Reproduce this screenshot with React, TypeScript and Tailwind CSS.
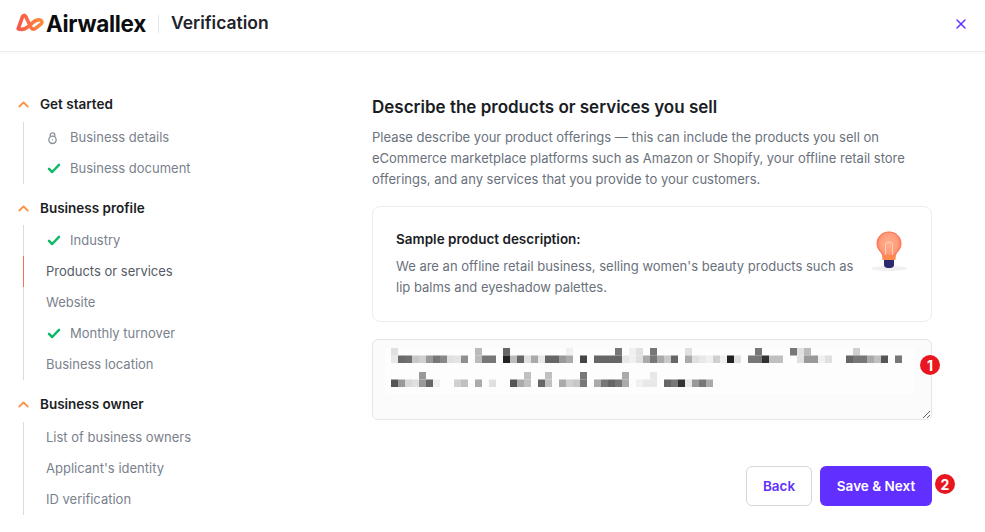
import React from "react";
import { ChevronUp, X } from "lucide-react";

const row1: [number, string][] = [
  [0,"e8"],[1,"6b"],[2,"70"],[3,"c8"],[4,"d0"],[5,"99"],[6,"77"],[7,"88"],[8,"e0"],[9,"e4"],[10,"90"],[12,"bb"],[13,"77"],[14,"77"],[16,"22"],[17,"bb"],[18,"66"],[19,"e0"],[20,"aa"],[21,"e8"],[22,"66"],[23,"66"],[24,"99"],[25,"aa"],[27,"44"],[29,"66"],[30,"66"],[31,"66"],[32,"66"],[33,"e8"],[34,"f0"],[35,"e0"],[36,"aa"],[37,"77"],[38,"aa"],[39,"c8"],[40,"66"],[42,"aa"],[43,"e0"],[44,"e8"],[45,"f0"],[46,"d0"],[47,"f0"],[48,"22"],[49,"e0"],[51,"77"],[52,"77"],[53,"33"],[54,"c0"],[55,"c0"],[58,"e0"],[59,"99"],[60,"99"],[61,"f0"],[62,"e0"],[65,"66"],[66,"77"],[67,"77"],[68,"aa"],[69,"c0"],[70,"55"],[72,"77"],
];
const top1: [number, string][] = [
  [0,"e0"],[12,"bb"],[16,"66"],[25,"f0"],[32,"77"],[34,"f0"],[35,"e0"],[37,"77"],[42,"e0"],[52,"77"],[57,"77"],[58,"e0"],[59,"bb"],[66,"d0"],
];
const row2: [number, string][] = [
  [0,"55"],[1,"99"],[2,"d8"],[3,"e0"],[4,"99"],[5,"66"],[6,"f0"],[9,"d0"],[10,"c0"],[12,"aa"],[14,"e0"],[17,"55"],[18,"aa"],[19,"c0"],[21,"66"],[22,"c0"],[24,"aa"],[25,"d0"],[26,"c8"],[27,"77"],[29,"aa"],[30,"77"],[31,"66"],[32,"77"],[33,"aa"],[35,"f0"],[36,"e8"],[37,"e8"],[39,"66"],[40,"77"],[41,"33"],[42,"e8"],[43,"99"],[44,"77"],[45,"aa"],
];
const top2: [number, string][] = [
  [4,"99"],[19,"c0"],[22,"c0"],[27,"77"],[33,"aa"],[37,"e8"],
];

function Mosaic() {
  const draw = (cells: [number, string][], y: number) =>
    cells.map(([c, g]) => (
      <rect key={`${y}-${c}`} x={c * 7} y={y} width={7} height={7.5} fill={`#${g}${g}${g}`} />
    ));
  return (
    <svg width="530" height="46" className="absolute left-[13px] top-[9px]" aria-hidden="true">
      <defs>
        <filter id="soft" x="-2%" y="-5%" width="104%" height="110%">
          <feGaussianBlur stdDeviation="0.45" />
        </filter>
      </defs>
      <rect x="0" y="0" width="530" height="46" fill="#fdfdfd" />
      <g filter="url(#soft)" transform="translate(6 0)">
        {draw(top1, 0)}
        {draw(row1, 7.5)}
        {draw(top2, 24)}
        {draw(row2, 31.5)}
      </g>
    </svg>
  );
}

function Logo() {
  return (
    <svg width="28" height="20" viewBox="0 0 28 20" fill="none" className="mb-[3px]" aria-hidden="true">
      <defs>
        <linearGradient id="lg" x1="0" y1="0" x2="28" y2="0" gradientUnits="userSpaceOnUse">
          <stop offset="0" stopColor="#f8524a" />
          <stop offset="1" stopColor="#ff8e3c" />
        </linearGradient>
      </defs>
      <path
        d="M2.200 15.800 L6.400 3.800 C7 2 8.800 2 9.800 3.600 L14.600 13.800 C15.800 16.400 17.800 16.800 19.800 15.200 L25.200 10.800 C26.600 9.400 25.800 6.800 23.400 6.800 C20.500 6.800 18.300 8 16.400 9.800 L11.500 14.200 C9 16.400 5.800 16.800 2.200 15.800 Z"
        stroke="url(#lg)"
        strokeWidth="3.600"
        strokeLinejoin="round"
      />
    </svg>
  );
}

function Bulb() {
  return (
    <svg width="36" height="42" viewBox="0 0 36 42" aria-hidden="true">
      <defs>
        <radialGradient id="bg" cx="50%" cy="42%" r="55%">
          <stop offset="0" stopColor="#ffb08f" />
          <stop offset="0.7" stopColor="#ff9a78" />
          <stop offset="1" stopColor="#fb6a4a" />
        </radialGradient>
      </defs>
      <ellipse cx="18" cy="37.500" rx="18" ry="2.500" fill="#f0f0f3" />
      <path d="M18 1 C10.500 1 6 6.500 6 12.500 C6 17 8.500 19.500 10.500 22 C11.500 23.500 12 25 12 28.500 L24 28.500 C24 25 24.500 23.500 25.500 22 C27.500 19.500 30 17 30 12.500 C30 6.500 25.500 1 18 1 Z" fill="url(#bg)" stroke="#fd6f50" strokeWidth="1" />
      <path d="M12 24 L24 24 L24 29 L12 29 Z" fill="#ff8a4c" />
      <path d="M14.500 24 L14.500 13 C14.500 10.500 21.500 10.500 21.500 13 L21.500 24" stroke="#ffd9c8" strokeWidth="0.8" fill="none" />
      <path d="M13 29 L23 29 L23 33.500 C23 37 20 37 18 37 C16 37 13 37 13 33.500 Z" fill="#2b2a6e" />
    </svg>
  );
}

function Padlock() {
  return (
    <svg width="12" height="14" viewBox="0 0 12 14" fill="none" stroke="#878e99" strokeWidth="1.400" aria-hidden="true">
      <circle cx="6" cy="9" r="4" />
      <path d="M3.500 5.500 V3.500 C3.500 0.800 8.500 0.800 8.500 3.500 V5.500" />
      <circle cx="6" cy="9" r="0.700" fill="#878e99" stroke="none" />
    </svg>
  );
}

function Tick() {
  return (
    <svg width="13" height="11" viewBox="0 0 13 11" fill="none" stroke="#12b76a" strokeWidth="2.500" strokeLinecap="round" strokeLinejoin="round" className="ml-[1px] mr-[9px] w-[14px]" aria-hidden="true">
      <path d="M1.500 5.800 L4.700 9 L11.500 1.800" />
    </svg>
  );
}

type Item = { label: string; icon?: "check" | "lock"; active?: boolean };

function Section({ title, items, className, listClass }: { title: string; items: Item[]; className: string; listClass: string }) {
  return (
    <div className={className}>
      <div className="flex h-6 items-center">
        <ChevronUp size={17} strokeWidth={2.6} className="ml-[15px] text-[#ff8e3c]" />
        <span className="ml-2 text-[13.500px] font-semibold text-[#1a1d24]">{title}</span>
      </div>
      <div className={`ml-[23px] border-l border-[#d9dbdf] ${listClass}`}>
        {items.map((it) => (
          <div
            key={it.label}
            className={`relative flex h-[31px] items-center pl-[22px] text-[13px] ${it.active ? "text-[#545b66]" : "text-[#7a818c]"}`}
          >
            {it.active && <span className="absolute -left-px top-0 h-full w-px bg-[#f0725c]" />}
            {it.icon === "check" && <Tick />}
            {it.icon === "lock" && <span className="mr-[12px] ml-[1px] flex w-[11px] justify-center"><Padlock /></span>}
            {it.label}
          </div>
        ))}
      </div>
    </div>
  );
}

function Badge({ n, className }: { n: number; className: string }) {
  return (
    <span className={`absolute flex h-5 w-5 items-center justify-center rounded-full bg-[#e8171f] text-[14px] font-bold text-white ${className}`}>
      {n}
    </span>
  );
}

export default function App() {
  return (
    <div className="h-[532px] w-[985px] overflow-hidden bg-white font-['Inter','Liberation_Sans',sans-serif]">
      <header className="flex h-[52px] items-center border-b border-[#ececee] pb-[3px] pl-4 pr-4 shadow-[0_1px_2px_rgba(0,0,0,0.04)]">
        <Logo />
        <span className="ml-[2px] text-[22.500px] font-bold tracking-[-0.3px] text-[#0c0d10]">Airwallex</span>
        <span className="ml-3 h-[18px] w-px bg-[#e8e8ea]" />
        <span className="mb-[2px] ml-3 text-[17.500px] font-semibold text-[#1f232b]">Verification</span>
        <button className="ml-auto text-[#612fff]" aria-label="Close">
          <X size={16} strokeWidth={2.2} />
        </button>
      </header>

      <div className="flex">
        <aside className="w-[372px] shrink-0 pt-10">
          <Section
            title="Get started"
            className=""
            listClass="mt-[6px]"
            items={[
              { label: "Business details", icon: "lock" },
              { label: "Business document", icon: "check" },
            ]}
          />
          <Section
            title="Business profile"
            className="mt-3"
            listClass="mt-[5px]"
            items={[
              { label: "Industry", icon: "check" },
              { label: "Products or services", active: true },
              { label: "Website" },
              { label: "Monthly turnover", icon: "check" },
              { label: "Business location" },
            ]}
          />
          <Section
            title="Business owner"
            className="mt-3"
            listClass="mt-[6px]"
            items={[
              { label: "List of business owners" },
              { label: "Applicant's identity" },
              { label: "ID verification" },
            ]}
          />
        </aside>

        <main className="w-[560px] pt-[43px]">
          <h1 className="text-[17px] font-semibold leading-6 text-[#1a1d24]">Describe the products or services you sell</h1>
          <p className="mt-[8px] w-[540px] text-[13px] leading-[21px] text-[#6a717c]">
            Please describe your product offerings — this can include the products you sell on eCommerce marketplace platforms such as Amazon or Shopify, your offline retail store offerings, and any services that you provide to your customers.
          </p>

          <section className="mt-4 flex h-[116px] items-start rounded-lg border border-[#ececee] pl-[23px] pr-6 pt-[22px]">
            <div className="w-[470px]">
              <h2 className="text-[13.500px] font-semibold leading-5 text-[#1a1d24]">Sample product description:</h2>
              <p className="mt-[7px] text-[13px] leading-[21px] text-[#6a717c]">
                We are an offline retail business, selling women's beauty products such as lip balms and eyeshadow palettes.
              </p>
            </div>
            <div className="ml-auto pt-[2px]"><Bulb /></div>
          </section>

          <div className="relative mt-[17px] h-[81px]">
            <textarea
              readOnly
              aria-label="Product description"
              className="block h-[81px] w-full rounded-md border border-[#e6e6ea] bg-[#fbfbfb] outline-none"
            />
            <Mosaic />
            <Badge n={1} className="left-[548px] top-4" />
          </div>

          <div className="relative mt-[46px] flex justify-end gap-2">
            <button className="h-10 w-[66px] rounded-md border border-[#d5d7dc] bg-white text-[13.500px] font-semibold text-[#612fff]">Back</button>
            <button className="h-10 w-[112px] rounded-md bg-[#612fff] text-[13.500px] font-semibold text-white">Save &amp; Next</button>
            <Badge n={2} className="left-[563px] top-[8px]" />
          </div>
        </main>
      </div>
    </div>
  );
}
